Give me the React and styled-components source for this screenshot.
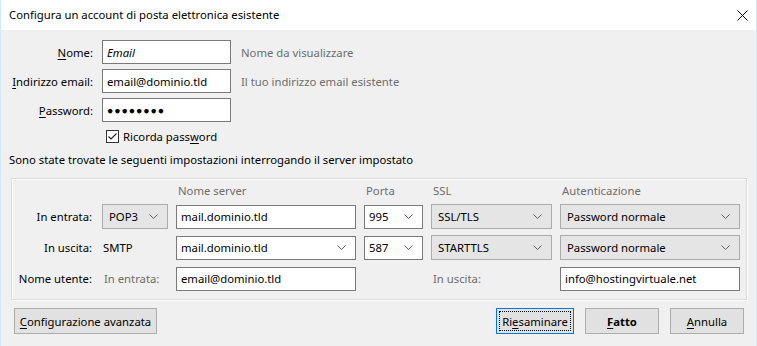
import React from "react";
import styled, { createGlobalStyle } from "styled-components";

const Global = createGlobalStyle`
  html, body { margin: 0; padding: 0; background: #f0f0f0; }
  body { font-family: "Noto Sans", "Open Sans", sans-serif; font-size: 11.3px; color: #000; }
  * { box-sizing: border-box; }
`;

const FONT = `"Noto Sans", "Open Sans", sans-serif`;
const SIZE = "11.3px";

const Window = styled.div`
  width: 757px;
  height: 346px;
  display: flex;
  flex-direction: column;
  border-left: 1px solid #d2eaf8;
  border-right: 1px solid #d2eaf8;
  background: #f0f0f0;
  font-family: ${FONT};
  font-size: ${SIZE};
  overflow: hidden;
`;

const TitleBar = styled.div`
  height: 30px;
  flex: 0 0 30px;
  background: #fff;
  display: flex;
  align-items: center;
  justify-content: space-between;
  padding: 0 8px 0 8px;
`;

const Title = styled.div`
  font-size: ${SIZE};
  color: #000;
  line-height: 16px;
`;

const Body = styled.div`
  flex: 1;
  padding: 10px 9px 0 8px;
  display: flex;
  flex-direction: column;
`;

const AccountGrid = styled.div`
  display: grid;
  grid-template-columns: 84px 129px auto;
  grid-auto-rows: 24px;
  column-gap: 9px;
  row-gap: 5px;
  align-items: center;
`;

const Label = styled.div`
  text-align: right;
  white-space: nowrap;
  padding-right: ${(p) => p.$pr || 0}px;
  color: ${(p) => (p.$muted ? "#6d6d6d" : "#000")};
`;

const Hint = styled.div`
  color: #6d6d6d;
  padding-left: 1px;
  white-space: nowrap;
`;

const Key = styled.span`
  text-decoration: underline;
  text-underline-offset: 2px;
`;

const TextField = styled.div`
  height: 24px;
  background: #fff;
  border: 1px solid #7a7a7a;
  display: flex;
  align-items: center;
  padding: 0 ${(p) => (p.$combo ? 9 : 4)}px 0 4px;
  justify-content: space-between;
  font-style: ${(p) => (p.$italic ? "italic" : "normal")};
  white-space: nowrap;
`;

const Dots = styled.span`
  font-size: 10.5px;
  letter-spacing: 0.9px;
  line-height: 1;
  padding-top: 1px;
`;

const CheckRow = styled.div`
  display: flex;
  align-items: center;
  gap: 4px;
  margin-top: 8px;
  padding-left: 97px;
  height: 13px;
`;

const CheckBox = styled.div`
  width: 13px;
  height: 13px;
  border: 1px solid #333;
  background: #fff;
  display: flex;
  align-items: center;
  justify-content: center;
`;

const Note = styled.div`
  margin-top: 9px;
  line-height: 15px;
  white-space: nowrap;
`;

const GroupBox = styled.div`
  margin-top: 11px;
  margin-left: 2px;
  border: 1px solid #dcdcdc;
  box-shadow: inset 1px 1px 0 #fff, 1px 1px 0 #fff;
  padding: 5px 5px 8px 0;
`;

const ServerGrid = styled.div`
  display: grid;
  grid-template-columns: 82px 66px 180px 59px 121px 180px;
  grid-template-rows: 14px 25px 25px 25px;
  column-gap: 8px;
  row-gap: 6px;
  align-items: center;
`;

const ColHead = styled.div`
  color: #6d6d6d;
  padding-left: 2px;
  line-height: 14px;
  white-space: nowrap;
`;

const Plain = styled.div`
  padding-left: ${(p) => p.$pl ?? 1}px;
  color: ${(p) => (p.$muted ? "#6d6d6d" : "#000")};
  white-space: nowrap;
`;

const Select = styled.div`
  height: 25px;
  background: #e5e5e5;
  border: 1px solid #acacac;
  display: flex;
  align-items: center;
  justify-content: space-between;
  padding: 0 9px 0 6px;
  white-space: nowrap;
`;

const ButtonBar = styled.div`
  margin-top: 8px;
  padding: 0 3px 0 5px;
  display: flex;
  align-items: center;
  gap: 11px;
`;

const Spacer = styled.div`
  flex: 1;
`;

const Button = styled.button`
  font-family: ${FONT};
  font-size: ${SIZE};
  color: #000;
  width: ${(p) => p.$w}px;
  height: 26px;
  background: #e1e1e1;
  border: 1px solid ${(p) => (p.$focus ? "#0078d7" : "#adadad")};
  font-weight: ${(p) => (p.$bold ? 700 : 400)};
  padding: 0;
  position: relative;
  display: flex;
  align-items: center;
  justify-content: center;
  white-space: nowrap;
`;

const FocusRing = styled.span`
  position: absolute;
  inset: 2px;
  border: 1px dotted #000;
  pointer-events: none;
`;

const Chevron = () => (
  <svg width="9" height="5" viewBox="0 0 9 5">
    <polyline points="0.5,0.5 4.5,4.5 8.5,0.5" fill="none" stroke="#606060" strokeWidth="1" />
  </svg>
);

const CloseIcon = () => (
  <svg width="11" height="11" viewBox="0 0 11 11">
    <path d="M0.5 0.5 L10.5 10.5 M10.5 0.5 L0.5 10.5" stroke="#000" strokeWidth="1" />
  </svg>
);

const CheckMark = () => (
  <svg width="11" height="11" viewBox="0 0 11 11">
    <polyline points="1.5,5.5 4,8 9.5,2.5" fill="none" stroke="#222" strokeWidth="1.2" />
  </svg>
);

export default function App() {
  return (
    <>
      <Global />
      <Window>
        <TitleBar>
          <Title>Configura un account di posta elettronica esistente</Title>
          <CloseIcon />
        </TitleBar>
        <Body>
          <AccountGrid>
            <Label><Key>N</Key>ome:</Label>
            <TextField $italic>Email</TextField>
            <Hint>Nome da visualizzare</Hint>

            <Label><Key>I</Key>ndirizzo email:</Label>
            <TextField>email@dominio.tld</TextField>
            <Hint>Il tuo indirizzo email esistente</Hint>

            <Label><Key>P</Key>assword:</Label>
            <TextField><Dots>●●●●●●●●</Dots></TextField>
            <span />
          </AccountGrid>

          <CheckRow>
            <CheckBox><CheckMark /></CheckBox>
            <span>Ricorda pass<Key>w</Key>ord</span>
          </CheckRow>

          <Note>Sono state trovate le seguenti impostazioni interrogando il server impostato</Note>

          <GroupBox>
            <ServerGrid>
              <span />
              <span />
              <ColHead>Nome server</ColHead>
              <ColHead>Porta</ColHead>
              <ColHead>SSL</ColHead>
              <ColHead>Autenticazione</ColHead>

              <Label $pr={2}>In entrata:</Label>
              <Select>POP3<Chevron /></Select>
              <TextField>mail.dominio.tld</TextField>
              <TextField $combo>995<Chevron /></TextField>
              <Select>SSL/TLS<Chevron /></Select>
              <Select>Password normale<Chevron /></Select>

              <Label $pr={2}>In uscita:</Label>
              <Plain>SMTP</Plain>
              <TextField $combo>mail.dominio.tld<Chevron /></TextField>
              <TextField $combo>587<Chevron /></TextField>
              <Select>STARTTLS<Chevron /></Select>
              <Select>Password normale<Chevron /></Select>

              <Label $pr={2}>Nome utente:</Label>
              <Plain $muted $pl={2}>In entrata:</Plain>
              <TextField>email@dominio.tld</TextField>
              <span />
              <Plain $muted $pl={2}>In uscita:</Plain>
              <TextField>info@hostingvirtuale.net</TextField>
            </ServerGrid>
          </GroupBox>

          <ButtonBar>
            <Button $w={143}><span><Key>C</Key>onfigurazione avanzata</span></Button>
            <Spacer />
            <Button $w={78} $focus><FocusRing /><span>Ri<Key>e</Key>saminare</span></Button>
            <Button $w={74} $bold><span><Key>F</Key>atto</span></Button>
            <Button $w={74}><span><Key>A</Key>nnulla</span></Button>
          </ButtonBar>
        </Body>
      </Window>
    </>
  );
}
